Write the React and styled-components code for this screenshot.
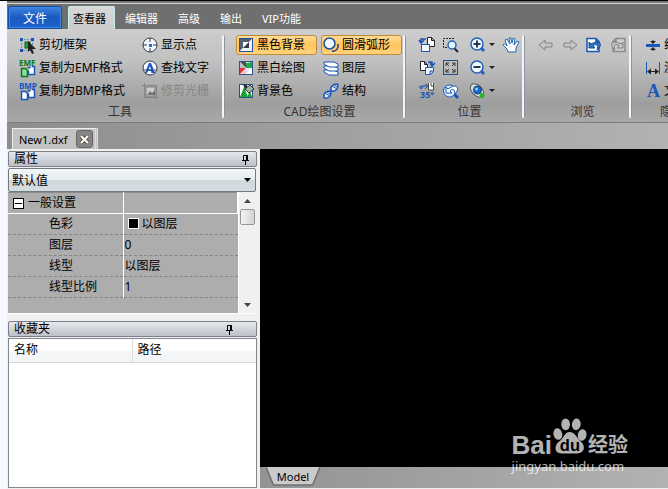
import React, { useState } from "react";
import styled, { createGlobalStyle, css } from "styled-components";

const BLUE = "#1857b8";

const GlobalStyle = createGlobalStyle`
  * {
    box-sizing: border-box;
  }

  body {
    margin: 0;
    overflow: hidden;
    font-family: "Noto Sans", "Noto Sans CJK SC", sans-serif;
    font-size: 12px;
    color: #000;
    background: #f5f8fd;
  }

  button,
  select {
    font: inherit;
    color: inherit;
    margin: 0;
  }
`;

/* ---------- icons ---------- */

const Svg = styled.svg`
  display: block;
  flex: none;
  width: 16px;
  height: 16px;
  overflow: visible;
  fill: none;
`;

const Sheet = ({ x, y, color = "#222" }) => (
  <path d={`M${x} ${y}h4l3 3v6h-7z M${x + 4} ${y}v3h3`} fill="#fff" stroke={color} />
);

const paths = {
  clip: (
    <>
      <rect x="1.5" y="2.5" width="11" height="11" stroke={BLUE} strokeDasharray="1 2" />
      <path d="M0 1h3v3H0z M11 1h3v3h-3z M0 12h3v3H0z" fill={BLUE} />
      <rect x="5" y="5" width="5" height="6" fill="#15a032" stroke="#0b6c1c" />
      <path d="M8 4v11l2-2 2 4 2-1-2-4h4z" fill="#222" />
    </>
  ),
  emf: (
    <>
      <path d="M1.500 8.500h4l2 2v6h-6z" fill="#8fdc92" stroke="#087a18" strokeWidth="1.500" />
      <path d="M7.500 7.500h3M12 6.500h2.500v8h-6v-4" fill="#fff" stroke={BLUE} strokeWidth="1.500" />
      <text x="-1" y="6" fontSize="8" fontWeight="700" fill="#087a18">EMF</text>
    </>
  ),
  bmp: (
    <>
      <path d="M1.500 8.500h4l2 2v6h-6z" fill="#fff" stroke={BLUE} strokeWidth="1.500" />
      <path d="M7.500 7.500h3M12 6.500h2.500v8h-6v-4" fill="#fff" stroke={BLUE} strokeWidth="1.500" />
      <text x="-1" y="6" fontSize="8" fontWeight="700" fill="#0b58c8">BMP</text>
    </>
  ),
  point: (
    <>
      <circle cx="8" cy="8" r="7" fill="#f4f8ff" stroke="#333b46" />
      <path d="M8 1v4M8 11v4M1 8h4M11 8h4" stroke="#333b46" />
      <path d="M7 7h3v3H7z" fill="#176cdf" />
    </>
  ),
  find: (
    <>
      <circle cx="8" cy="8" r="7" fill="#f4f8ff" stroke="#333b46" />
      <path d="M1 10h14" stroke="#555" />
      <path d="M7 3h2l4 10H9.500l-.5-2H6l-1 2H3z M8 6L6.500 9.500h2.500z" fill={BLUE} fillRule="evenodd" />
    </>
  ),
  raster: (
    <>
      <path d="M2.500 0v14.500H16M0 2.500h14.500V16" stroke="#858585" />
      <rect x="4" y="4" width="9" height="9" fill="#cdcdcd" stroke="#808080" />
      <path d="M5 12l3-4 2 2 3-3v5z" fill="#747474" />
    </>
  ),
  dark: (
    <>
      <rect x="1.500" y="1.500" width="13" height="13" fill="#fff" stroke="#2450a4" />
      <path d="M2 2h12L2 14z" fill="#555f70" />
      <path d="M2 14L14 2v12z" fill="#eef2f8" />
      <path d="M5 11V5h6z" fill="#fff" />
      <path d="M5 11l6-6v6z" fill="#343b49" />
    </>
  ),
  bw: (
    <>
      <rect x="1.500" y="1.500" width="13" height="13" fill="#fff" stroke="#2f5288" />
      <path d="M2 2h6v6z" fill="#4a4f58" />
      <path d="M2 2l6 6H2z" fill="#b9bfc8" />
      <path d="M8 8V3l6-1v6z" fill="#25a746" />
      <path d="M2 8h6l-6 6z" fill="#dc3535" />
      <path d="M8 8v6H3z" fill="#f4c9cb" />
      <path d="M8 8h6l-6 6z" fill="#dce8f4" />
    </>
  ),
  color: (
    <>
      <rect x="1.500" y="1.500" width="13" height="13" fill="#fff" stroke="#2a4f80" />
      <path d="M2 14L6 4l4 10z" fill="#18a333" />
      <path d="M9 14l3-6 2 6z" fill="#18a333" />
      <path d="M5 1l4 1 1 4-3 1z" fill="#27343a" />
      <path d="M7 6l5-4 4 4-5 4z" fill="#9fb0a5" stroke="#22332a" />
    </>
  ),
  arc: (
    <>
      <circle cx="6.500" cy="6.500" r="5.500" fill="#f4f8ff" stroke="#1d4f9f" strokeWidth="1.500" />
      <path d="M15 7c1 4-2 8-6 7" stroke="#1d3f80" strokeWidth="1.500" />
    </>
  ),
  layers: (
    <>
      <path d="M1 10h9l5 2v3H6l-5-3z" fill="#fff" stroke={BLUE} />
      <path d="M1 6h9l5 2v3H6L1 8z" fill="#fff" stroke={BLUE} />
      <path d="M1 2h10l4 2v3H6L1 4z" fill="#fff" stroke={BLUE} />
    </>
  ),
  structure: (
    <>
      <path d="M1 15c-1-6 3-7 7-7M1 15c6 1 7-3 7-7M8 8c-1-6 3-7 7-7M8 8c6 1 7-3 7-7" fill="#dce9f8" stroke={BLUE} strokeWidth="1.500" />
      <path d="M2 10l5 3M4 9l3 2M9 3l5 3M11 2l3 2" stroke="#2d5f9e" />
    </>
  ),
  prev: (
    <>
      <Sheet x={8.5} y={0.5} />
      <rect x="2.500" y="7.500" width="8" height="7" fill="#f5faff" stroke={BLUE} />
      <path d="M7 2H2v4M0 3l2 3 3-3" stroke={BLUE} strokeWidth="1.500" />
    </>
  ),
  next: (
    <>
      <Sheet x={1.5} y={1.5} />
      <path d="M6.500 7.500h8v4l-3 3h-5z M14 11h-3v3" fill="#f5faff" stroke={BLUE} />
      <path d="M9 2h4v4M11 3l2 3 3-3" stroke={BLUE} strokeWidth="1.500" />
    </>
  ),
  rotate: (
    <>
      <path d="M9.500 0v7h5V0M12 0v3h2" fill="#fff" stroke="#444" />
      <path d="M8 3H2v3M0 3l2 3 3-3M6 1l3 2-3 3" stroke={BLUE} />
      <text x="1" y="15" fontSize="9" fontWeight="700" fill={BLUE}>35°</text>
    </>
  ),
  zoomArea: (
    <>
      <path d="M11 1.500H.5v9h4" stroke="#222" strokeDasharray="2 1" />
      <path d="M11 11l4 4" stroke="#222" strokeWidth="2" />
      <circle cx="9" cy="8" r="4" fill="#e7f3ff" stroke="#2264ba" strokeWidth="1.500" />
    </>
  ),
  fit: (
    <>
      <rect x=".5" y=".5" width="14" height="14" stroke="#244e8f" />
      <path d="M3 6V3h3M3 3l3 3M9 3h3v3M12 3L9 6M3 9v3h3M3 12l3-3M12 9v3H9M12 12l-3-3" stroke="#333" />
    </>
  ),
  reload: (
    <>
      <path d="M11 11l4 4" stroke={BLUE} strokeWidth="3" />
      <circle cx="6.500" cy="8" r="6" fill="#dceeff" stroke={BLUE} />
      <path d="M3 4v6h6L7 8c2-3 5-2 5 3 5-5 3-12-7-5z" fill="#fff" stroke={BLUE} />
    </>
  ),
  zoomIn: (
    <>
      <path d="M10 10l4 4" stroke="#2265c1" strokeWidth="3" />
      <circle cx="7" cy="7" r="6" fill="#f1f8ff" stroke="#2462b8" strokeWidth="1.500" />
      <path d="M3.500 7h7M7 3.500v7" stroke="#26384a" strokeWidth="2" />
    </>
  ),
  zoomOut: (
    <>
      <path d="M10 10l4 4" stroke="#2265c1" strokeWidth="3" />
      <circle cx="7" cy="7" r="6" fill="#f1f8ff" stroke="#2462b8" strokeWidth="1.500" />
      <path d="M3.500 7h7" stroke="#26384a" strokeWidth="2" />
    </>
  ),
  orbit: (
    <>
      <ellipse cx="7" cy="7.500" rx="8" ry="5" transform="rotate(45 7 7.500)" fill="#d6dde2" stroke="#545c60" />
      <circle cx="7.500" cy="7" r="4" fill="#176bd0" stroke="#173f73" />
      <circle cx="6.500" cy="6" r="1.500" fill="#94cbff" />
      <circle cx="12" cy="12.500" r="2.500" fill="#22b52a" />
    </>
  ),
  hand: (
    <path
      d="M5 15l-1-3-4-4c1-2 2-1 4 1L2 3l2-1 3 5-1-6h2l1 5 1-5 2 1-1 6 3-4 2 1-3 6v4z"
      fill="#f7fbff"
      stroke="#2464ae"
    />
  ),
  left: <path d="M7 3L1 8l6 5v-3h7V6H7z" fill="#c4c4c4" stroke="#858585" />,
  right: <path d="M9 3l6 5-6 5v-3H2V6h7z" fill="#c4c4c4" stroke="#858585" />,
  page: (
    <>
      <path d="M1 1.500h9l3 3v10H1z M10 2v3h3" fill="#fff" stroke={BLUE} strokeWidth="1.500" />
      <path d="M3 5v6h6L7 9c3-3 6-1 4 4 6-5 4-11-6-6z" fill="#2e79ca" stroke="#174b91" />
    </>
  ),
  pageOff: (
    <>
      <path d="M15 1.500H6l-3 3v10h12z M6 2v3H3" fill="#cfcfcf" stroke="#8a8a8a" strokeWidth="1.500" />
      <path d="M13 5v6H7l2-2C6 6 3 8 5 13-1 8 1 2 11 7z" fill="#c4c4c4" stroke="#808080" />
    </>
  ),
  dimension: (
    <>
      <path d="M1 8.500h14" stroke={BLUE} strokeWidth="3" />
      <path d="M8 3v3M8 11v3" stroke="#222" />
      <path d="M5 4h6L8 7z M5 13h6l-3-3z" fill="#222" />
    </>
  ),
  measure: (
    <>
      <path d="M1.500 2v12M14.500 2v12" stroke={BLUE} />
      <path d="M3 11.500h10" stroke="#222" />
      <path d="M2 11.500l4-3v6z M14 11.500l-4-3v6z" fill="#222" />
    </>
  ),
  text: (
    <text x="2" y="14" fontFamily="Liberation Serif" fontSize="18" fontWeight="700" fill={BLUE}>A</text>
  ),
};

const Icon = ({ name }) => (
  <Svg viewBox="0 0 16 16" aria-hidden="true">
    {paths[name]}
  </Svg>
);

const Pin = () => (
  <svg width="9" height="11" viewBox="0 0 9 11" fill="none" stroke="#000" aria-hidden="true">
    <path d="M2.500 6V1.500h4V6M1 6.500h7M4.500 7v4" />
    <path d="M6 1v5" strokeWidth="2" />
  </svg>
);

/* ---------- ribbon ---------- */

const Window = styled.div`
  display: flex;
  flex-direction: column;
  height: 100vh;
  padding-left: 7px;
  border-top: 1px solid #000;
  overflow: hidden;
`;

const TabBar = styled.nav`
  display: flex;
  flex: none;
  height: 28px;
  padding: 2px 0 0 1px;
  background: #6f6f6f;
  border-top: 2px solid #777;
  box-shadow: inset 0 1px #d8d8d8;
  white-space: nowrap;
`;

const FileButton = styled.button`
  width: 54px;
  height: 23px;
  padding: 0;
  margin: 1px 5px 0 0;
  border: 1px solid #124ba9;
  border-radius: 2px 2px 0 0;
  color: #fff;
  background: linear-gradient(#3f83e0, #1b59bf 50%, #1c63cd);
  box-shadow: inset 0 0 0 1px #4388df;
`;

const RibbonTab = styled.button`
  height: 23px;
  margin: 1px 0 0;
  padding: 0 10px;
  border: 0;
  background: none;
  color: #fff;
  font-size: 11px;

  ${({ $active }) =>
    $active &&
    css`
      margin-left: 1px;
      padding: 0 8px 0 4px;
      color: #000;
      background: linear-gradient(#d8d8d8, #cbcbcb);
      border: 1px solid #c3eeee;
      border-bottom: 0;
      border-radius: 2px 2px 0 0;
    `}
`;

const Ribbon = styled.div`
  display: flex;
  flex: none;
  height: 94px;
  padding-top: 4px;
  border-bottom: 1px solid #7c7c7c;
  background: linear-gradient(#cecece, #c0c0c0 35%, #9e9e9e 80%, #a8a8a8);
  overflow: hidden;
`;

const Group = styled.section`
  display: flex;
  flex: none;
  flex-direction: column;
  height: 89px;
  padding-left: ${(props) => props.$pad || 12}px;
  white-space: nowrap;
`;

const Divider = styled.span`
  flex: none;
  width: 3px;
  height: 83px;
  margin-top: 2px;
  border: 1px solid #8e949d;
  border-width: 0 1px 0 0;
  border-radius: 2px;
  background: #f2f5fc;
`;

const Tools = styled.div`
  display: grid;
  grid-template-columns: ${(props) => props.$columns};
  grid-template-rows: repeat(3, 23px);
  align-items: center;
`;

const Caption = styled.div`
  color: #333;
  text-align: center;
  line-height: 20px;
`;

const Tool = styled.button`
  display: flex;
  align-items: center;
  justify-self: start;
  gap: 3px;
  height: 20px;
  padding: 0 1px;
  border: 1px solid transparent;
  border-radius: 3px;
  background: none;
  line-height: 18px;
  white-space: nowrap;

  &:disabled {
    color: #858585;
  }

  ${({ $pressed }) =>
    $pressed &&
    css`
      width: 81px;
      border-color: #c18a38;
      background: linear-gradient(#ffdc98, #ffc55c 50%, #ffd47e);
    `}
`;

const Caret = styled.span`
  border: 3px solid transparent;
  border-top-color: #222;
  border-bottom: 0;
`;

const ToolButton = ({ icon, label, title, pressed, disabled, menu }) => (
  <Tool $pressed={pressed} aria-pressed={pressed} aria-label={label ? undefined : title} disabled={disabled}>
    <Icon name={icon} />
    {label}
    {menu && <Caret />}
  </Tool>
);

/* ---------- document tabs ---------- */

const FileTabs = styled.div`
  display: flex;
  flex: none;
  align-items: flex-end;
  height: 26px;
  padding-left: 5px;
  background: linear-gradient(90deg, #8e8e8e, #b2b2b2);
`;

const FileTab = styled.div`
  display: flex;
  align-items: center;
  gap: 8px;
  height: 21px;
  padding: 0 2px 0 6px;
  border: 1px solid #eee;
  border-bottom: 0;
  border-right: 3px double #ddd;
  background: #c2c2c2;
  font-size: 11px;
`;

const Close = styled.button`
  display: grid;
  place-items: center;
  width: 17px;
  height: 18px;
  padding: 0;
  border: 1px solid #666;
  border-radius: 3px;
  background: #858585;
`;

/* ---------- side panels ---------- */

const Workspace = styled.div`
  display: flex;
  flex: 1;
  min-height: 0;
`;

const Side = styled.aside`
  display: flex;
  flex: none;
  flex-direction: column;
  width: 253px;
  padding: 2px 3px 1px 1px;
  background: #f0f0f0;
`;

const PanelTitle = styled.header`
  display: flex;
  flex: none;
  align-items: center;
  justify-content: space-between;
  height: 16px;
  padding: 0 ${(props) => props.$right}px 0 5px;
  border: 1px solid #7d8087;
  border-radius: 2px;
  background: linear-gradient(#e6e8ed, #bcc0c9);
  line-height: 14px;
`;

const PinButton = styled.button`
  display: flex;
  padding: 0;
  border: 0;
  background: none;
`;

const SelectBox = styled.div`
  display: grid;
  flex: none;
  align-items: center;
  margin: 1px 1px 0 0;
  height: 24px;
  border: 1px solid #707a80;
  border-radius: 2px;
  background: linear-gradient(#f3f7f8, #e6ebed 50%, #cfd8dc 51%, #d5dde0);

  > * {
    grid-area: 1 / 1;
  }

  svg {
    justify-self: end;
    margin-right: 4px;
    pointer-events: none;
  }
`;

const Select = styled.select`
  width: 100%;
  height: 22px;
  padding: 0 3px;
  border: 0;
  appearance: none;
  background: none;
`;

const PropertyBox = styled.div`
  display: flex;
  flex: none;
  height: 122px;
  margin-right: 1px;
  background: #adadad;
  border-bottom: 1px solid #fff;
`;

const PropertyTable = styled.table`
  flex: 1;
  align-self: flex-start;
  border-collapse: collapse;
  table-layout: fixed;

  th,
  td {
    height: 21px;
    padding: 0 0 0 1px;
    font-weight: 400;
    line-height: 18px;
    text-align: left;
    border-bottom: 1px dashed #858585;
  }

  th {
    width: 116px;
    padding-left: 41px;
    border-right: 1px solid #fff;
  }

  thead th {
    padding-left: 5px;
    border-bottom: 1px solid #fff;
    border-top: 1px solid #8d8d8d;
  }
`;

const Heading = styled.span`
  display: flex;
  align-items: center;
  gap: 4px;
`;

const Toggle = styled.button`
  display: grid;
  place-items: center;
  width: 11px;
  height: 11px;
  padding: 0;
  border: 1px solid #000;
  background: #fff;

  &::before {
    content: "";
    width: 7px;
    height: 1px;
    background: #000;
  }
`;

const Swatch = styled.span`
  display: inline-block;
  width: 11px;
  height: 11px;
  margin: 0 3px;
  border: 1px solid #fff;
  background: #000;
  vertical-align: -1px;
`;

const ScrollBar = styled.div`
  display: flex;
  flex-direction: column;
  width: 18px;
  border-left: 1px solid #fff;
  background: #f0f0f0;
`;

const ScrollButton = styled.button`
  display: grid;
  place-items: center;
  height: 17px;
  padding: 0;
  border: 0;
  background: none;
`;

const Thumb = styled.div`
  height: 16px;
  margin: 0 1px auto;
  border: 1px solid #979797;
  border-radius: 2px;
  background: linear-gradient(90deg, #f5f5f5, #d3d3d3);
`;

const Favorites = styled.section`
  display: flex;
  flex: 1;
  flex-direction: column;
  min-height: 0;
  margin-top: 7px;
`;

const List = styled.div`
  flex: 1;
  margin-top: 1px;
  border: 1px solid #828790;
  background: #fff;
`;

const ListTable = styled.table`
  width: 100%;
  border-collapse: collapse;
  table-layout: fixed;

  th {
    height: 23px;
    padding: 0 0 0 5px;
    font-weight: 400;
    line-height: 18px;
    text-align: left;
    background: linear-gradient(#fff, #fff 50%, #f6f7f8 51%, #f3f4f5);
    border-bottom: 1px solid #d5d5d5;
  }

  th:first-child {
    width: 123px;
    border-right: 1px solid #dedfe1;
  }
`;

/* ---------- drawing area ---------- */

const Drawing = styled.main`
  position: relative;
  display: flex;
  flex: 1;
  flex-direction: column;
  min-width: 0;
`;

const Canvas = styled.div`
  flex: 1;
  background: #000;
`;

const SheetTabs = styled.div`
  display: flex;
  flex: none;
  height: 22px;
  padding-left: 6px;
  background: linear-gradient(90deg, #939393, #b2b2b2);
  border-bottom: 1px solid #eee;
`;

const SheetTab = styled.button`
  display: grid;
  place-items: center;
  width: 54px;
  height: 19px;
  padding: 0;
  border: 0;
  background: none;
  font-size: 11px;
  line-height: 16px;

  > * {
    grid-area: 1 / 1;
  }
`;

const Watermark = styled.div`
  position: absolute;
  right: 40px;
  bottom: 14px;
  color: #fff;
  opacity: 0.7;
`;

const Brand = styled.div`
  display: flex;
  align-items: flex-end;
  justify-content: space-between;
  gap: 1px;
  height: 38px;
  margin-bottom: 2px;
  font: 700 26px/20px "Liberation Sans", sans-serif;
`;

const BrandCn = styled.span`
  font: 700 20px/22px "Noto Sans CJK SC", sans-serif;
`;

const Url = styled.div`
  font: 13px/18px "Noto Sans", sans-serif;
`;

const rows = [
  ["色彩", "以图层", true],
  ["图层", "0"],
  ["线型", "以图层"],
  ["线型比例", "1"],
];

const tabs = ["查看器", "编辑器", "高级", "输出", "VIP功能"];

function App() {
  const [active, setActive] = useState(tabs[0]);
  const [open, setOpen] = useState(true);

  return (
    <Window>
      <GlobalStyle />
      <TabBar>
        <FileButton>文件</FileButton>
        {tabs.map((tab) => (
          <RibbonTab key={tab} $active={tab === active} onClick={() => setActive(tab)}>
            {tab}
          </RibbonTab>
        ))}
      </TabBar>

      <Ribbon>
        <Group $pad={11}>
          <Tools $columns="122px 82px">
            <ToolButton icon="clip" label="剪切框架" />
            <ToolButton icon="point" label="显示点" />
            <ToolButton icon="emf" label="复制为EMF格式" />
            <ToolButton icon="find" label="查找文字" />
            <ToolButton icon="bmp" label="复制为BMP格式" />
            <ToolButton icon="raster" label="修剪光栅" disabled />
          </Tools>
          <Caption>工具</Caption>
        </Group>
        <Divider />
        <Group $pad={11}>
          <Tools $columns="85px 82px">
            <ToolButton icon="dark" label="黑色背景" pressed />
            <ToolButton icon="arc" label="圆滑弧形" pressed />
            <ToolButton icon="bw" label="黑白绘图" />
            <ToolButton icon="layers" label="图层" />
            <ToolButton icon="color" label="背景色" />
            <ToolButton icon="structure" label="结构" />
          </Tools>
          <Caption>CAD绘图设置</Caption>
        </Group>
        <Divider />
        <Group $pad={11}>
          <Tools $columns="24px 27px 33px 21px">
            <ToolButton icon="prev" title="上一页" />
            <ToolButton icon="zoomArea" title="窗口缩放" />
            <ToolButton icon="zoomIn" title="放大" menu />
            <ToolButton icon="hand" title="平移" />
            <ToolButton icon="next" title="下一页" />
            <ToolButton icon="fit" title="适合窗口" />
            <ToolButton icon="zoomOut" title="缩小" menu />
            <span />
            <ToolButton icon="rotate" title="旋转" />
            <ToolButton icon="reload" title="上一视图" />
            <ToolButton icon="orbit" title="动态观察" menu />
          </Tools>
          <Caption>位置</Caption>
        </Group>
        <Divider />
        <Group $pad={11}>
          <Tools $columns="repeat(3, 24px) 21px">
            <ToolButton icon="left" title="后退" disabled />
            <ToolButton icon="right" title="前进" disabled />
            <ToolButton icon="page" title="撤销" />
            <ToolButton icon="pageOff" title="重做" disabled />
          </Tools>
          <Caption>浏览</Caption>
        </Group>
        <Divider />
        <Group $pad={11}>
          <Tools $columns="58px">
            <ToolButton icon="dimension" label="线宽" />
            <ToolButton icon="measure" label="测量" />
            <ToolButton icon="text" label="文本" />
          </Tools>
          <Caption>隐藏</Caption>
        </Group>
      </Ribbon>

      <FileTabs>
        <FileTab>
          New1.dxf
          <Close aria-label="关闭">
            <svg width="9" height="9" viewBox="0 0 9 9" aria-hidden="true">
              <path d="M1 1l7 7M8 1L1 8" stroke="#5d5542" strokeWidth="4" />
              <path d="M1 1l7 7M8 1L1 8" stroke="#fff" strokeWidth="2" />
            </svg>
          </Close>
        </FileTab>
      </FileTabs>

      <Workspace>
        <Side>
          <PanelTitle $right={6}>
            属性
            <PinButton aria-label="固定属性">
              <Pin />
            </PinButton>
          </PanelTitle>
          <SelectBox>
            <Select aria-label="属性对象">
              <option>默认值</option>
            </Select>
            <svg width="7" height="4" aria-hidden="true">
              <path d="M0 0h7L3.500 4z" />
            </svg>
          </SelectBox>
          <PropertyBox>
            <PropertyTable>
              <thead>
                <tr>
                  <th>
                    <Heading>
                      <Toggle aria-label="展开或折叠" onClick={() => setOpen(!open)} />
                      一般设置
                    </Heading>
                  </th>
                  <th />
                </tr>
              </thead>
              <tbody>
                {open &&
                  rows.map(([name, value, swatch]) => (
                    <tr key={name}>
                      <th scope="row">{name}</th>
                      <td>
                        {swatch && <Swatch />}
                        {value}
                      </td>
                    </tr>
                  ))}
              </tbody>
            </PropertyTable>
            <ScrollBar>
              <ScrollButton aria-label="向上滚动">
                <svg width="7" height="4" aria-hidden="true">
                  <path d="M0 4h7L3.500 0z" fill="#444" />
                </svg>
              </ScrollButton>
              <Thumb />
              <ScrollButton aria-label="向下滚动">
                <svg width="7" height="4" aria-hidden="true">
                  <path d="M0 0h7L3.500 4z" fill="#444" />
                </svg>
              </ScrollButton>
            </ScrollBar>
          </PropertyBox>

          <Favorites>
            <PanelTitle $right={22}>
              收藏夹
              <PinButton aria-label="固定收藏夹">
                <Pin />
              </PinButton>
            </PanelTitle>
            <List>
              <ListTable>
                <thead>
                  <tr>
                    <th>名称</th>
                    <th>路径</th>
                  </tr>
                </thead>
              </ListTable>
            </List>
          </Favorites>
        </Side>

        <Drawing>
          <Canvas />
          <SheetTabs>
            <SheetTab>
              <svg width="54" height="19" viewBox="0 0 54 19" aria-hidden="true">
                <path d="M0 0h54l-8 18H8z" fill="#cacaca" />
                <path d="M0 0l7 17q1 1 2 1h36q1 0 2-1l7-17" fill="none" stroke="#707070" strokeWidth="1.500" />
              </svg>
              <span>Model</span>
            </SheetTab>
          </SheetTabs>
          <Watermark>
            <Brand>
              Bai
              <svg width="34" height="38" viewBox="0 0 35 38" fill="#fff" aria-hidden="true">
                <ellipse cx="5" cy="17" rx="4.500" ry="6" transform="rotate(-12 5 17)" />
                <ellipse cx="13" cy="7" rx="4.500" ry="6" />
                <ellipse cx="24" cy="7" rx="4.500" ry="6" transform="rotate(8 24 7)" />
                <ellipse cx="30" cy="18" rx="4.500" ry="6" transform="rotate(10 30 18)" />
                <path d="M17 15c6 0 7 6 12 10 5 5 3 12-4 12H9c-8 0-8-8-3-12 5-3 6-10 11-10z" />
                <text x="7" y="34" fontFamily="Liberation Sans" fontSize="17" fontWeight="700" fill="#000">du</text>
              </svg>
              <BrandCn>经验</BrandCn>
            </Brand>
            <Url>jingyan.baidu.com</Url>
          </Watermark>
        </Drawing>
      </Workspace>
    </Window>
  );
}

export default App;
